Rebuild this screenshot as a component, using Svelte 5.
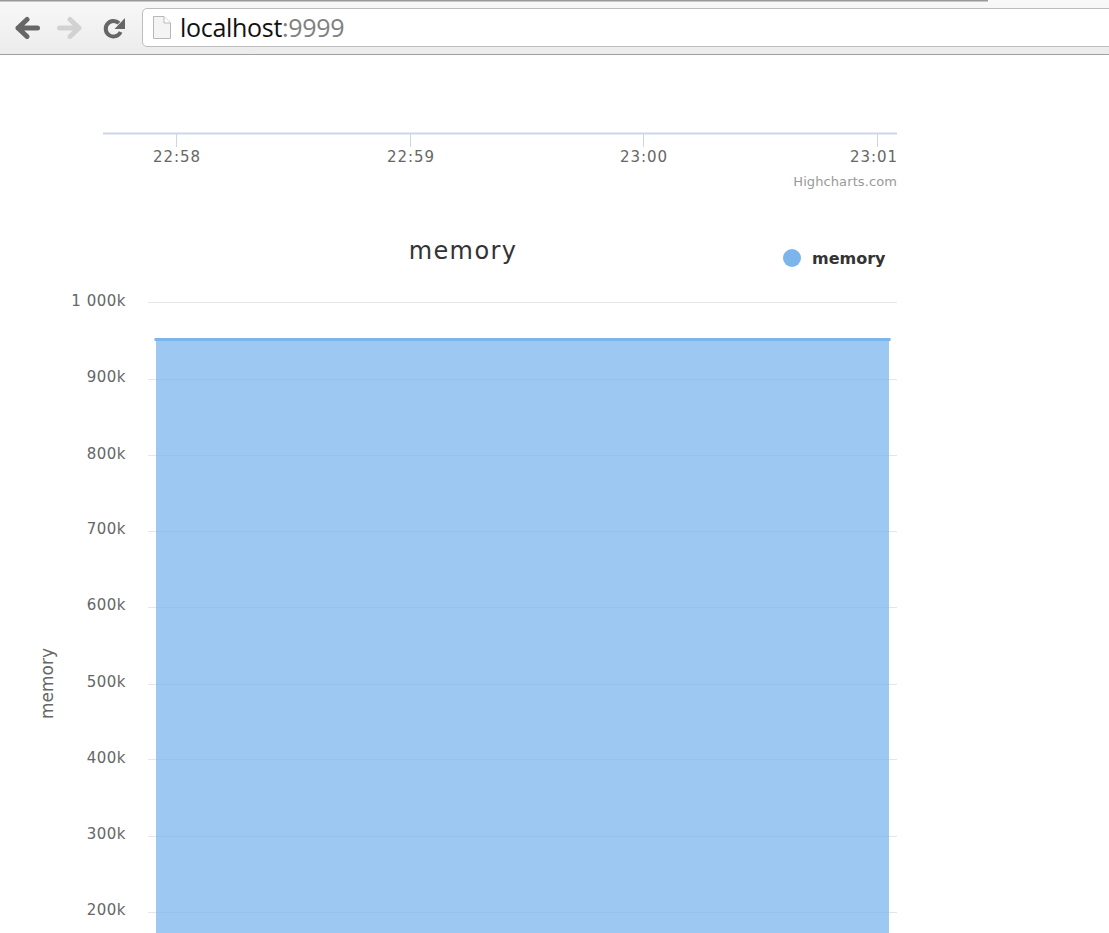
<script>
	const times = [
		{ x: 176, label: '22:58' },
		{ x: 410, label: '22:59' },
		{ x: 643, label: '23:00' },
		{ x: 877, label: '23:01', tx: 873 }
	];

	// y is relative to the svg of the memory chart
	const ticks = [
		{ y: 82, dy: 4, label: '1 000k' },
		{ y: 159, dy: 3, label: '900k' },
		{ y: 235, dy: 4, label: '800k' },
		{ y: 311, dy: 3, label: '700k' },
		{ y: 387, dy: 3, label: '600k' },
		{ y: 464, dy: 3, label: '500k' },
		{ y: 539, dy: 4, label: '400k' },
		{ y: 616, dy: 3, label: '300k' },
		{ y: 692, dy: 3, label: '200k' }
	];
</script>

<div class="browser">
	<div class="tabstrip"></div>
	<div class="toolbar">
		<div class="nav">
			<svg width="26" height="23" viewBox="0 0 26 23">
				<path d="M13 3.5 L4 12 L13 20.5 M4 12 H23.5" fill="none" stroke="#666" stroke-width="5" stroke-linecap="round" stroke-linejoin="round" />
			</svg>
			<svg width="26" height="23" viewBox="0 0 26 23">
				<path d="M14 3.5 L23 12 L14 20.5 M23 12 H3.5" fill="none" stroke="#d2d2d2" stroke-width="5" stroke-linecap="round" stroke-linejoin="round" />
			</svg>
			<svg class="reload" width="24" height="25" viewBox="0 0 24 25">
				<path d="M18.6 17 A7.8 7.8 0 1 1 17 8.2" fill="none" stroke="#666" stroke-width="4" />
				<path d="M23 3 L23 14 L12.5 14 Z" fill="#666" />
			</svg>
		</div>
		<div class="omnibox">
			<svg width="20" height="24" viewBox="0 0 20 24">
				<path d="M1.5 1.5 H12 L18.5 8 V23.5 H1.5 Z" fill="#f4f4f4" stroke="#b8b8b8" />
				<path d="M12 1.5 V8 H18.5" fill="#fff" stroke="#b8b8b8" />
			</svg>
			<span class="url">localhost<span class="port">:9999</span></span>
		</div>
	</div>
</div>

<svg class="chart" width="1109" height="165" viewBox="0 0 1109 165">
	<line x1="103" x2="897" y1="78.5" y2="78.5" class="axis" />
	{#each times as t}
		<line x1={t.x + 0.5} x2={t.x + 0.5} y1="79" y2="92" class="axis thin" />
		<text x={(t.tx ?? t.x) + 1} y="107" text-anchor="middle" class="label time">{t.label}</text>
	{/each}
	<text x="897" y="131" text-anchor="end" class="credits">Highcharts.com</text>
</svg>

<svg class="chart" width="1109" height="714" viewBox="0 0 1109 714">
	<text x="463" y="39" text-anchor="middle" class="title">memory</text>
	<circle cx="792" cy="38" r="9" fill="#7cb5ec" />
	<text x="812" y="44" class="legend">memory</text>

	{#each ticks as t}
		<line x1="148" x2="897" y1={t.y + 0.5} y2={t.y + 0.5} class="grid" />
		<text x="126" y={t.y + t.dy} text-anchor="end" class="label value">{t.label}</text>
	{/each}

	<rect x="156" y="120" width="733" height="594" fill="#7cb5ec" opacity="0.75" />
	<line x1="154.5" x2="890.5" y1="119.5" y2="119.5" stroke="#7cb5ec" stroke-width="3" />

	<text transform="translate(53 463.5) rotate(-90)" text-anchor="middle" class="label side">memory</text>
</svg>

<style>
	:global(body) {
		margin: 0;
		background: #fff;
		overflow: hidden;
	}

	.browser {
		height: 55px;
		box-sizing: border-box;
		border-bottom: 1px solid #a0a0a0;
		background: linear-gradient(#f8f8f8, #ececec);
		overflow: hidden;
	}

	.tabstrip {
		width: 988px;
		height: 1px;
		background: #999;
		border-bottom: 1px solid #c8c8c8;
	}

	.toolbar {
		display: flex;
		align-items: center;
		gap: 14px;
		padding: 6px 0 0 14px;
	}

	.nav {
		display: flex;
		align-items: center;
		gap: 16px;
		width: 114px;
	}

	.reload {
		margin-left: 4px;
	}

	.omnibox {
		flex: 1;
		height: 39px;
		box-sizing: border-box;
		display: flex;
		align-items: center;
		gap: 8px;
		padding: 0 0 2px 9px;
		margin-right: -8px;
		background: #fff;
		border: 1px solid #bdbdbd;
		border-radius: 5px;
	}

	.url {
		font-family: "Open Sans", "Liberation Sans", sans-serif;
		font-size: 25px;
		color: #111;
		letter-spacing: -0.3px;
	}

	.port {
		color: #808080;
	}

	.chart {
		display: block;
	}

	.chart text {
		font-family: "DejaVu Sans", "Open Sans", sans-serif;
	}

	.axis {
		stroke: #ccd6e8;
		stroke-width: 2;
	}

	.thin {
		stroke-width: 1;
	}

	.grid {
		stroke: #e6e6e6;
		stroke-width: 1;
	}

	.label {
		font-size: 15px;
		fill: #666;
	}

	.time {
		letter-spacing: 1px;
	}

	.value {
		letter-spacing: 0.5px;
	}

	.side {
		font-size: 17px;
	}

	.credits {
		font-size: 13px;
		letter-spacing: 0.1px;
		fill: #999;
	}

	.title {
		font-size: 24px;
		letter-spacing: 1.4px;
		fill: #333;
	}

	.legend {
		font-size: 16px;
		font-weight: 700;
		fill: #333;
	}
</style>
